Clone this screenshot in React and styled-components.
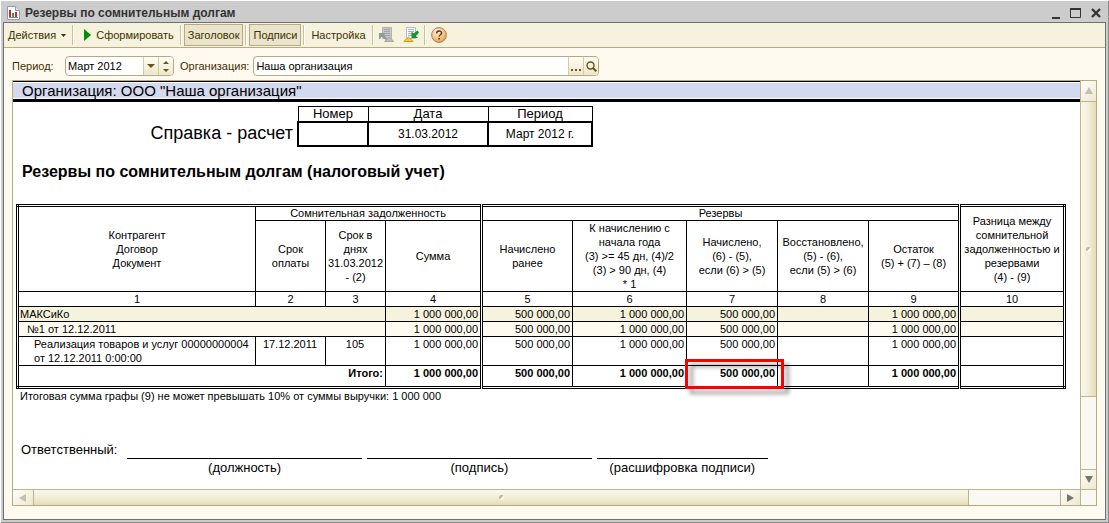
import React, { useState } from "react";
import styled, { createGlobalStyle, css } from "styled-components";

const rows = [
  {
    kind: "group",
    cells: ["1 000 000,00", "500 000,00", "1 000 000,00", "500 000,00", "", "1 000 000,00", ""],
    name: "МАКСиКо",
  },
  {
    kind: "contract",
    cells: ["1 000 000,00", "500 000,00", "1 000 000,00", "500 000,00", "", "1 000 000,00", ""],
    name: "№1 от 12.12.2011",
  },
  {
    kind: "document",
    cells: ["1 000 000,00", "500 000,00", "1 000 000,00", "500 000,00", "", "1 000 000,00", ""],
    name: "Реализация товаров и услуг 00000000004\nот 12.12.2011 0:00:00",
    due: "17.12.2011",
    days: "105",
  },
];

const totals = ["1 000 000,00", "500 000,00", "1 000 000,00", "500 000,00", "", "1 000 000,00", ""];

const columnWidths = [238, 70, 60, 96, 91, 114, 91, 91, 91, 105];

// columns that start with a double line
const isDouble = (index) => index === 1 || index === 6;

const ReportIcon = () => (
  <svg width="13" height="14" viewBox="0 0 13 14" aria-hidden="true">
    <path d="M.5.5h8l4 4v9H.5z" fill="#fff" stroke="#8f9bab" />
    <path d="M8.5.5v4h4" fill="#dfe5ee" stroke="#8f9bab" />
    <path d="M2 4h2v7H2z" fill="#d8232a" />
    <path d="M5 7h2v4H5z" fill="#2f9a3f" />
    <path d="M8 6h2v5H8z" fill="#d8232a" />
    <path d="M2 11.5h9" stroke="#7b8794" />
  </svg>
);

const SheetIcon = ({ restore }) => (
  <svg width="16" height="16" viewBox="0 0 16 16" aria-hidden="true">
    <path
      d="M3.5.5h9v11h-9z"
      fill={restore ? "#fafcff" : "#c3c6c8"}
      stroke={restore ? "#a9bccd" : "#b1b4b6"}
    />
    <path
      d="M5 2.5h6M5 4.5h6M5 6.5h6M5 8.5h6"
      stroke={restore ? "#9db3ca" : "#a3a7ab"}
    />
    <path
      d={restore ? "M.8 14.5 5.500 10l4.700 4.500z" : "M5.500 14.500l4.700-4.500 4.700 4.500z"}
      fill={restore ? "#f3c93a" : "#bcbbb2"}
      stroke={restore ? "#d29a16" : "#aaa9a0"}
    />
    {restore ? (
      <path d="M14.500 3.500l1.500 2-3 3.500 2 2H8.500V4.500l2 2z" fill="#1f8f2d" />
    ) : (
      <path d="M0 6h7L5 8l3 3.500L6.500 13 3 9.500 1 12H0z" fill="#929c92" />
    )}
  </svg>
);

const HelpIcon = () => (
  <svg width="16" height="16" viewBox="0 0 16 16" aria-hidden="true">
    <defs>
      <radialGradient id="helpFill" cx="40%" cy="30%" r="75%">
        <stop offset="0" stopColor="#fff3df" />
        <stop offset="0.500" stopColor="#f9c98f" />
        <stop offset="1" stopColor="#ee9a4a" />
      </radialGradient>
    </defs>
    <circle cx="8" cy="8" r="7.400" fill="url(#helpFill)" stroke="#a08468" />
    <path
      d="M5.600 6.400c0-3.200 5-3.200 5-.3 0 1.700-2.500 1.700-2.500 3.500"
      fill="none"
      stroke="#5b3a17"
      strokeWidth="1.400"
    />
    <path d="M7.300 11h1.600v1.600H7.300z" fill="#5b3a17" />
  </svg>
);

const SearchIcon = () => (
  <svg width="11" height="11" viewBox="0 0 11 11" aria-hidden="true">
    <circle cx="4.500" cy="4.500" r="3.500" fill="none" stroke="#6b5310" strokeWidth="1.400" />
    <path d="M7 7l3.300 3.300" stroke="#6b5310" strokeWidth="2" />
  </svg>
);

const shapes = {
  up: "M4 0l4 7H0z",
  down: "M0 0h8L4 7z",
  left: "M0 4l7-4v8z",
  right: "M7 4L0 0v8z",
};

const ScrollArrow = ({ to, dim }) => (
  <svg width="8" height="8" viewBox="0 0 8 8" aria-hidden="true">
    <path d={shapes[to]} fill={dim ? "#c3c0ae" : "#77766b"} />
  </svg>
);

const App = () => {
  const [period, setPeriod] = useState("Март 2012");
  const [org, setOrg] = useState("Наша организация");
  const [showTitle, setShowTitle] = useState(true);
  const [showSigns, setShowSigns] = useState(true);

  return (
    <>
      <GlobalStyle />
      <Window>
        <TitleBar>
          <ReportIcon />
          <h1>Резервы по сомнительным долгам</h1>
          <WindowButton aria-label="Свернуть">
            <svg width="12" height="12" viewBox="0 0 12 12">
              <path d="M2 10h8v2H2z" fill="#333" />
            </svg>
          </WindowButton>
          <WindowButton aria-label="Развернуть">
            <svg width="12" height="12" viewBox="0 0 12 12">
              <path d="M.5 1.500h10v9H.5z" fill="none" stroke="#333" />
              <path d="M0 1h11v2H0z" fill="#333" />
            </svg>
          </WindowButton>
          <WindowButton aria-label="Закрыть">
            <svg width="12" height="12" viewBox="0 0 12 12">
              <path d="M2 2l8 8M10 2l-8 8" stroke="#333" strokeWidth="2.400" />
            </svg>
          </WindowButton>
        </TitleBar>
        <Client>
          <Toolbar>
            <ToolButton>
              Действия
              <svg width="5" height="3" viewBox="0 0 5 3" aria-hidden="true">
                <path d="M0 0h5L2.500 3z" fill="#3f3000" />
              </svg>
            </ToolButton>
            <Separator />
            <ToolButton $main>
              <svg width="7" height="12" viewBox="0 0 7 12" aria-hidden="true">
                <path d="M0 0l7 6-7 6z" fill="#078a07" />
              </svg>
              Сформировать
            </ToolButton>
            <Separator />
            <ToolButton
              $pressed={showTitle}
              aria-pressed={showTitle}
              onClick={() => setShowTitle(!showTitle)}
            >
              Заголовок
            </ToolButton>
            <Separator />
            <ToolButton
              $pressed={showSigns}
              aria-pressed={showSigns}
              onClick={() => setShowSigns(!showSigns)}
            >
              Подписи
            </ToolButton>
            <Separator />
            <ToolButton>Настройка</ToolButton>
            <Separator />
            <ToolButton $icon aria-label="Сохранить значения" disabled>
              <SheetIcon />
            </ToolButton>
            <ToolButton $icon aria-label="Восстановить значения">
              <SheetIcon restore />
            </ToolButton>
            <Separator />
            <ToolButton $icon aria-label="Справка">
              <HelpIcon />
            </ToolButton>
          </Toolbar>

          <Filters>
            <label htmlFor="period">Период:</label>
            <Field $width="109px">
              <input id="period" value={period} onChange={(e) => setPeriod(e.target.value)} />
              <FieldButton aria-label="Выбрать период">
                <svg width="8" height="4" viewBox="0 0 8 4">
                  <path d="M0 0h8L4 4z" fill="#6b5310" />
                </svg>
              </FieldButton>
              <FieldButton aria-label="Изменить период">
                <svg width="6" height="11" viewBox="0 0 6 11">
                  <path d="M0 3h6L3 0zM0 8h6l-3 3z" fill="#6b5310" />
                </svg>
              </FieldButton>
            </Field>
            <label htmlFor="org">Организация:</label>
            <Field $width="346px">
              <input id="org" value={org} onChange={(e) => setOrg(e.target.value)} />
              <FieldButton aria-label="Выбрать">
                <svg width="10" height="10" viewBox="0 0 10 10">
                  <path d="M0 8h2v2H0zM4 8h2v2H4zM8 8h2v2H8z" fill="#6b5310" />
                </svg>
              </FieldButton>
              <FieldButton aria-label="Открыть">
                <SearchIcon />
              </FieldButton>
            </Field>
          </Filters>

          <Viewer>
            <Sheet>
              <OrgLine>Организация: ООО "Наша организация"</OrgLine>
              {showTitle && (
                <>
                  <Reference>
                    <span>Справка - расчет</span>
                    <ReferenceTable>
                      <thead>
                        <tr>
                          <th>Номер</th>
                          <th>Дата</th>
                          <th>Период</th>
                        </tr>
                      </thead>
                      <tbody>
                        <tr>
                          <td />
                          <td>31.03.2012</td>
                          <td>Март 2012 г.</td>
                        </tr>
                      </tbody>
                    </ReferenceTable>
                  </Reference>
                  <h2>Резервы по сомнительным долгам (налоговый учет)</h2>
                </>
              )}

              <ReportTable>
                <colgroup>
                  {columnWidths.map((width, i) => (
                    <col key={i} style={{ width }} />
                  ))}
                </colgroup>
                <thead>
                  <tr>
                    <Head rowSpan={2}>{"Контрагент\nДоговор\nДокумент"}</Head>
                    <Head colSpan={3} $band>
                      Сомнительная задолженность
                    </Head>
                    <Head colSpan={5} $band $double>
                      Резервы
                    </Head>
                    <Head rowSpan={2} $double>
                      {"Разница между\nсомнительной\nзадолженностью и\nрезервами\n(4) - (9)"}
                    </Head>
                  </tr>
                  <tr>
                    <Head>{"Срок\nоплаты"}</Head>
                    <Head>{"Срок в\nднях\n31.03.2012\n- (2)"}</Head>
                    <Head>Сумма</Head>
                    <Head $double>{"Начислено\nранее"}</Head>
                    <Head>
                      {"К начислению с\nначала года\n(3) >= 45 дн, (4)/2\n(3) > 90 дн, (4)\n* 1"}
                    </Head>
                    <Head>{"Начислено,\n(6) - (5),\nесли (6) > (5)"}</Head>
                    <Head>{"Восстановлено,\n(5) - (6),\nесли (5) > (6)"}</Head>
                    <Head>{"Остаток\n(5) + (7) – (8)"}</Head>
                  </tr>
                  <tr>
                    {columnWidths.map((_, i) => (
                      <Head key={i} $double={i === 4 || i === 9}>
                        {i + 1}
                      </Head>
                    ))}
                  </tr>
                </thead>
                <tbody>
                  {rows.map((row) => (
                    <Row key={row.kind} $kind={row.kind}>
                      <NameCell $kind={row.kind} colSpan={row.due ? 1 : 3}>
                        {row.name}
                      </NameCell>
                      {row.due && <Cell $center>{row.due}</Cell>}
                      {row.due && <Cell $center>{row.days}</Cell>}
                      {row.cells.map((value, i) => (
                        <Cell key={i} $double={isDouble(i)}>
                          {value}
                        </Cell>
                      ))}
                    </Row>
                  ))}
                </tbody>
                <tfoot>
                  <Row $kind="total">
                    <Cell colSpan={3}>Итого:</Cell>
                    {totals.map((value, i) => (
                      <Cell key={i} $double={isDouble(i)}>
                        {value}
                        {i === 3 && <Marker />}
                      </Cell>
                    ))}
                  </Row>
                </tfoot>
              </ReportTable>
              <Note>
                Итоговая сумма графы (9) не может превышать 10% от суммы выручки: 1 000 000
              </Note>

              {showSigns && (
                <Signatures>
                  <span>Ответственный:</span>
                  <Sign>(должность)</Sign>
                  <Sign>(подпись)</Sign>
                  <Sign>(расшифровка подписи)</Sign>
                </Signatures>
              )}
            </Sheet>

            <ScrollBar $vertical>
              <ScrollButton aria-label="Вверх">
                <ScrollArrow to="up" dim />
              </ScrollButton>
              <Thumb $grow={294}>
                <Grip />
              </Thumb>
              <Track $grow={72} />
              <ScrollButton aria-label="Вниз">
                <ScrollArrow to="down" />
              </ScrollButton>
            </ScrollBar>
            <ScrollBar>
              <ScrollButton aria-label="Влево">
                <ScrollArrow to="left" dim />
              </ScrollButton>
              <Thumb $grow={934}>
                <Grip />
              </Thumb>
              <Track $grow={91} />
              <ScrollButton aria-label="Вправо">
                <ScrollArrow to="right" />
              </ScrollButton>
            </ScrollBar>
            <Corner />
          </Viewer>
        </Client>
      </Window>
    </>
  );
};

const GlobalStyle = createGlobalStyle`
  * {
    box-sizing: border-box;
  }
  body {
    margin: 0;
    background: #fff;
    font: 11px/14px "Liberation Sans", Arial, sans-serif;
    color: #000;
  }
  h1, h2, p {
    margin: 0;
  }
  button, input {
    font: inherit;
    color: inherit;
    margin: 0;
    padding: 0;
    border: 0;
    background: none;
  }
  svg {
    display: block;
    flex: none;
  }
`;

const Window = styled.div`
  display: flex;
  flex-direction: column;
  min-height: calc(100vh - 1px);
  margin: 1px 0 0 1px;
  padding: 0 2px 2px;
  background: #ccc;
  border-right: 1px solid #8a8a8a;
  border-bottom: 1px solid #8a8a8a;
`;

const TitleBar = styled.header`
  display: flex;
  align-items: center;
  height: 21px;
  padding: 2px 0 0 4px;
  color: #333;
  h1 {
    flex: 1;
    margin-left: 5px;
    font-size: 12px;
    line-height: 16px;
    white-space: nowrap;
  }
`;

const WindowButton = styled.button`
  display: flex;
  justify-content: center;
  width: 20px;
`;

const Client = styled.main`
  flex: 1;
  display: flex;
  flex-direction: column;
  background: #fffaf0;
  border: 1px solid #707070;
`;

const Toolbar = styled.div`
  display: flex;
  align-items: center;
  gap: 2px;
  height: 25px;
  background: #f5f2dd;
  border-bottom: 1px solid #b6aa80;
  color: #3f3000;
`;

const ToolButton = styled.button`
  display: flex;
  align-items: center;
  gap: 5px;
  height: 22px;
  padding: 0 3px;
  border: 1px solid transparent;
  white-space: nowrap;
  ${({ $main }) => $main && "padding-left: 7px;"}
  ${({ $icon }) => $icon && "padding: 0 2px;"}
  ${({ $pressed }) =>
    $pressed &&
    css`
      background: #e9e4cb;
      border-color: #b6aa80;
    `}
`;

const Separator = styled.span`
  width: 2px;
  height: 20px;
  background: linear-gradient(90deg, #c9c199 50%, #fff 50%);
`;

const Filters = styled.div`
  display: flex;
  align-items: center;
  padding: 8px 8px 4px;
  color: #3f3000;
  label {
    margin-right: 4px;
  }
  label:first-child {
    width: 49px;
  }
`;

const Field = styled.div`
  display: flex;
  width: ${({ $width }) => $width};
  height: 20px;
  margin-right: 6px;
  background: #fff;
  border: 1px solid #b6aa80;
  border-radius: 4px;
  overflow: hidden;
  input {
    flex: 1;
    min-width: 0;
    padding-left: 2px;
    color: #000;
    outline: none;
  }
`;

const FieldButton = styled.button`
  display: flex;
  align-items: center;
  justify-content: center;
  width: 15px;
  border-left: 1px solid #d3cba6;
  background: linear-gradient(#fffdf5, #ece7cd);
`;

const Viewer = styled.section`
  flex: 1;
  display: grid;
  grid-template-columns: minmax(0, 1fr) 16px;
  grid-template-rows: 1fr 16px;
  margin: 0 8px 13px;
  border: 1px solid #b6aa80;
`;

const Sheet = styled.article`
  background: #fff;
  border-top: 1px solid #000;
  overflow: hidden;
  h2 {
    margin: 15px 9px 0;
    font-size: 16px;
    line-height: 20px;
  }
`;

const OrgLine = styled.p`
  padding-left: 9px;
  margin-top: 1px;
  background: #d3d9ef;
  font-size: 15px;
  line-height: 15px;
  box-shadow: 0 1px #fff, 0 4px #000;
`;

const Reference = styled.div`
  display: flex;
  align-items: center;
  margin-top: 8px;
  span {
    width: 280px;
    text-align: right;
    font-size: 18px;
    line-height: 20px;
    margin: 12px 4px 0 0;
  }
`;

const ReferenceTable = styled.table`
  width: 296px;
  table-layout: fixed;
  border-collapse: collapse;
  font-size: 12px;
  text-align: center;
  th {
    padding: 0;
    font-weight: normal;
    font-size: 13px;
    border: 1px solid #000;
  }
  td {
    height: 24px;
    padding: 0;
    border: 2px solid #000;
  }
  th:first-child {
    width: 70px;
  }
  th:nth-child(2) {
    width: 120px;
  }
`;

const ReportTable = styled.table`
  width: calc(100% - 17px);
  margin: 22px 0 0 3px;
  table-layout: fixed;
  border-collapse: collapse;
  border: 3px double #000;
  font-size: 11px;
  line-height: 14px;
`;

const doubleLine = css`
  border-left: 3px double #000;
`;

const Head = styled.th`
  padding: 0;
  border: 1px solid #000;
  font-weight: normal;
  white-space: pre;
  ${({ $band }) => $band && "line-height: 13px;"}
  ${({ $double }) => $double && doubleLine}
`;

const Cell = styled.td`
  position: relative;
  padding: 0 2px 0 1px;
  border: 1px solid #000;
  text-align: ${({ $center }) => ($center ? "center" : "right")};
  vertical-align: top;
  white-space: nowrap;
  ${({ $double }) => $double && doubleLine}
`;

const indents = { group: "1px", contract: "8px", document: "15px" };

const NameCell = styled(Cell)`
  padding-left: ${({ $kind }) => indents[$kind]};
  text-align: left;
  white-space: pre;
`;

const fills = { group: "#f5f2dd", contract: "#fffaf0" };

const Row = styled.tr`
  background: ${({ $kind }) => fills[$kind] || "#fff"};
  ${({ $kind }) =>
    $kind === "total" &&
    css`
      height: 22px;
      font-weight: bold;
    `}
`;

// red frame round the accrued total
const Marker = styled.span`
  position: absolute;
  inset: -7px -7px -3px -2px;
  border: 3px solid #f00;
  filter: drop-shadow(5px 5px 2px rgba(0, 0, 0, 0.4));
  z-index: 1;
`;

const Note = styled.p`
  margin-left: 7px;
  font-size: 11px;
  line-height: 14px;
`;

const Signatures = styled.div`
  display: grid;
  grid-template-columns: 101px 236fr 225fr 172fr;
  column-gap: 5px;
  margin: 39px 312px 0 8px;
  font-size: 13px;
  line-height: 16px;
`;

const Sign = styled.span`
  margin-top: 16px;
  border-top: 1px solid #000;
  padding-top: 1px;
  text-align: center;
  white-space: nowrap;
`;

const ScrollBar = styled.div`
  display: flex;
  flex-direction: ${({ $vertical }) => ($vertical ? "column" : "row")};
  --face: linear-gradient(
    ${({ $vertical }) => ($vertical ? "90deg" : "180deg")},
    #faf8ee,
    #f0ebcf 60%,
    #e2dcb8
  );
  --line: 1px solid #beb58e;
  border-${({ $vertical }) => ($vertical ? "left" : "top")}: var(--line);
  > * + * {
    border-${({ $vertical }) => ($vertical ? "top" : "left")}: var(--line);
  }
`;

const ScrollButton = styled.button`
  display: flex;
  align-items: center;
  justify-content: center;
  flex: 0 0 20px;
  background: linear-gradient(135deg, #fffefa, #ece8d0);
`;

const Thumb = styled.div`
  display: flex;
  align-items: center;
  justify-content: center;
  flex: ${({ $grow }) => $grow} 1 0;
  background: var(--face);
`;

const Track = styled.div`
  flex: ${({ $grow }) => $grow} 1 0;
  background: #faf8f2;
`;

const Grip = styled.i`
  width: 5px;
  height: 5px;
  border-radius: 3px;
  background: linear-gradient(135deg, #bdb898 40%, #fbf9ef 60%);
`;

const Corner = styled.div`
  border: solid #beb58e;
  border-width: 1px 0 0 1px;
  background: #faf8f2;
`;

export default App;
